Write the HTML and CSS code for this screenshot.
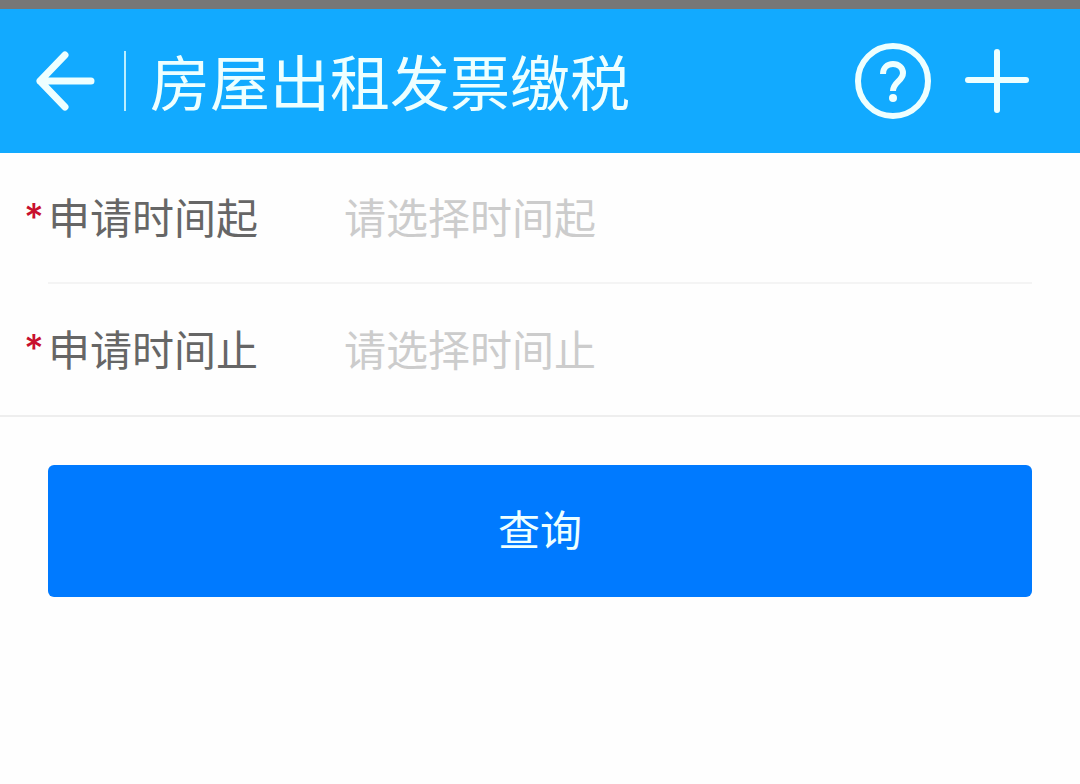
FILE: index.html
```html
<!DOCTYPE html>
<html lang="zh-CN">
<head>
<meta charset="utf-8">
<meta name="viewport" content="width=device-width, initial-scale=1">
<title>房屋出租发票缴税</title>
<link rel="stylesheet" href="styles.css">
</head>
<body>
<header class="topbar">
  <button class="icon-button" type="button" aria-label="返回">
    <svg class="icon-back" viewBox="0 0 60 60" aria-hidden="true"><path d="M30 4 5 30l25 26M5 30h51"/></svg>
  </button>
  <h1 class="title">房屋出租发票缴税</h1>
  <button class="icon-button" type="button" aria-label="帮助">
    <svg class="icon-help" viewBox="0 0 76 76" aria-hidden="true"><circle cx="38" cy="38" r="35"/><path class="hook" d="M28 31c0-6 4-10 10-10s10 4 10 9c0 8-10 9-10 18"/><circle class="dot" cx="38" cy="55" r="4"/></svg>
  </button>
  <button class="icon-button" type="button" aria-label="添加">
    <svg class="icon-plus" viewBox="0 0 64 64" aria-hidden="true"><path d="M32 3v58M3 31h58"/></svg>
  </button>
</header>
<main>
  <form class="form">
    <div class="fields">
      <div class="field">
        <span class="required">*</span>
        <div class="field-body">
          <label class="label" for="start">申请时间起</label>
          <input class="input" id="start" type="text" placeholder="请选择时间起" required>
        </div>
      </div>
      <div class="field">
        <span class="required">*</span>
        <div class="field-body">
          <label class="label" for="end">申请时间止</label>
          <input class="input" id="end" type="text" placeholder="请选择时间止" required>
        </div>
      </div>
    </div>
    <div class="actions">
      <button class="submit" type="submit">查询</button>
    </div>
  </form>
</main>
</body>
</html>
```
FILE: styles.css
```css
* {
  box-sizing: border-box;
}

body {
  margin: 0;
  background: #fefefe;
  color: #666;
  font-family: "Noto Sans CJK SC", sans-serif;
  font-size: 42px;
}

button,
input {
  font: inherit;
}

.topbar {
  display: flex;
  align-items: center;
  min-height: 153px;
  padding: 0 51px 0 35px;
  border-top: 9px solid #777;
  background: #12aaff;
  color: #eff;
}

.icon-button {
  display: flex;
  padding: 0;
  border: 0;
  background: none;
  color: inherit;
}

.icon-button svg {
  fill: none;
  stroke: currentColor;
  stroke-width: 6;
  stroke-linecap: round;
  stroke-linejoin: round;
}

.icon-button .icon-back {
  width: 60px;
  stroke-width: 7;
}

.icon-help {
  width: 76px;
}

.icon-help .dot {
  fill: currentColor;
  stroke: none;
}

.icon-help .hook {
  stroke-linecap: butt;
}

.icon-plus {
  width: 64px;
  margin-left: 34px;
}

.title {
  flex: 1;
  margin: 0 0 0 29px;
  padding: 0 0 2px 24px;
  border-left: 2px solid #bef;
  font-size: 60px;
  font-weight: 400;
  line-height: 58px;
}

.fields {
  border-bottom: 2px solid #eee;
}

.field {
  display: flex;
  padding-right: 48px;
}

.required {
  width: 48px;
  padding-left: 24px;
  color: #c8102e;
  font-family: Inter, sans-serif;
  font-size: 38px;
  font-weight: 500;
  line-height: 128px;
}

.field-body {
  display: flex;
  flex: 1;
  align-items: center;
  min-height: 131px;
  padding-bottom: 4px;
}

.field:first-child .field-body {
  border-bottom: 2px solid #f4f4f4;
}

.label {
  width: 296px;
}

.input {
  flex: 1;
  min-width: 0;
  padding: 0;
  border: 0;
  outline: 0;
  background: none;
  color: #666;
}

.input::placeholder {
  color: #ccc;
  opacity: 1;
}

.actions {
  padding: 48px;
}

.submit {
  width: 100%;
  min-height: 132px;
  padding: 0 0 8px;
  border: 0;
  border-radius: 6px;
  background: #007aff;
  color: #eff;
}
```
